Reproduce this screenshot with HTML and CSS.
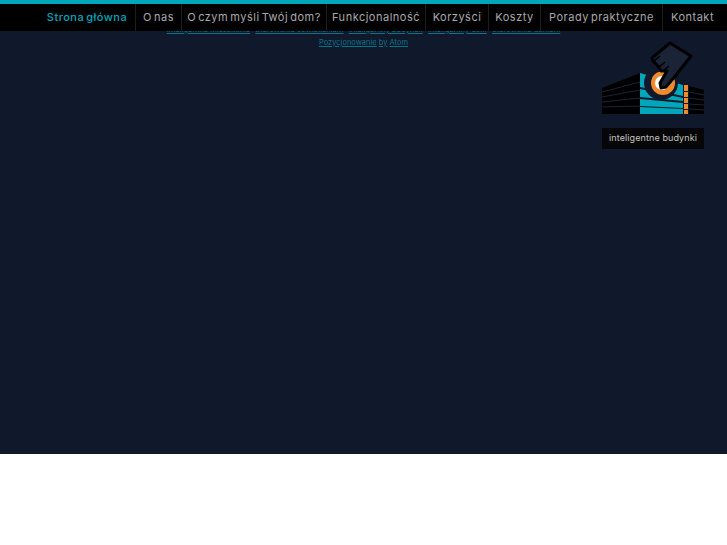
FILE: index.html
```html
<!doctype html>
<html lang="pl">
	<head>
		<meta charset="utf-8">
		<title>Inteligentne budynki</title>
		<link rel="stylesheet" href="styles.css">
	</head>
	<body>
		<div class="strona">
			<div class="stopka">
				<p>
					<a href="#">Inteligentne mieszkanie</a>
					<a href="#">Sterowanie oświetleniem</a>
					<a href="#">Inteligentny budynek</a>
					<a href="#">Inteligentny dom</a>
					<a href="#">Sterowanie domem</a>
				</p>
				<p class="atom"><a href="#">Pozycjonowanie</a> <a href="#">by</a> <a href="#">Atom</a></p>
			</div>

			<nav class="menu">
				<a class="aktywny" href="#">Strona główna</a>
				<a href="#">O nas</a>
				<a href="#">O czym myśli Twój dom?</a>
				<a href="#">Funkcjonalność</a>
				<a href="#">Korzyści</a>
				<a href="#">Koszty</a>
				<a href="#">Porady praktyczne</a>
				<a href="#">Kontakt</a>
			</nav>

			<div class="logo">
				<svg width="104" height="76" viewBox="0 0 104 76">
					<!-- lewe skrzydlo -->
					<path d="M1 48 L39 33 V74 H1 Z" fill="#000"/>
					<path d="M1 52 L39 42 M1 57 L39 50 M1 62 L39 58 M1 67 L39 66" stroke="#1b2336" stroke-width="1" fill="none"/>
					<!-- fasada -->
					<path d="M39 33 L82 45 V56 L39 47 Z M39 49 L82 58 V61 L39 57 Z M39 59 L82 63 V68 L39 66 Z M39 67 L82 69 V74 H39 Z" fill="#00a7ba"/>
					<!-- pasek pomaranczowy -->
					<path d="M83 45 H87 V51 H83 Z M83 52 H87 V57 H83 Z M83 58 H87 V63 H83 Z M83 64 H87 V69 H83 Z M83 70 H87 V74 H83 Z" fill="#f08a2c"/>
					<!-- prawe skrzydlo -->
					<path d="M88 46 L103 50 V74 H88 Z" fill="#000"/>
					<path d="M88 52 L103 55 M88 58 L103 60 M88 64 L103 65 M88 69 L103 70" stroke="#1b2336" stroke-width="1" fill="none"/>
					<!-- kolo -->
					<circle cx="60" cy="43" r="17" fill="#10182b"/>
					<circle cx="62" cy="43" r="12" fill="#f08a2c"/>
					<circle cx="61" cy="43" r="7" fill="#fff"/>
					<!-- reka -->
					<path d="M69 3 L90 16 L75 35 L65 47 L60 48 L59 43 L66 31 L60 31 L57 26 L52 21 L51 18 Z" fill="#1b2336" stroke="#000" stroke-width="3" stroke-linejoin="round"/>
					<path d="M53 21 L59 16 M58 27 L64 22 M62 31 L68 26" stroke="#000" stroke-width="1.5" fill="none"/>
				</svg>
				<span class="logo-napis">inteligentne budynki</span>
			</div>
		</div>
	</body>
</html>
```

FILE: styles.css
```css
html, body {
	margin: 0;
	height: 100%;
	background-color: #fff;
}

body {
	font-family: "Inter", sans-serif;
}

.strona {
	position: relative;
	height: 454px;
	overflow: hidden;
	background-color: #10182b;
}

.menu {
	position: absolute;
	top: 0;
	left: 0;
	right: 0;
	height: 27px;
	display: grid;
	grid-template-columns: 96px 46px 145px 99px 63px 52px 122px 60px;
	justify-content: end;
	padding-right: 5px;
	background-color: #000;
	border-top: 4px solid #00a7ba;
}

.menu a {
	line-height: 26px;
	font-size: 11px;
	letter-spacing: 0.5px;
	word-spacing: -1.5px;
	text-align: center;
	white-space: nowrap;
	color: #a9a9a9;
	text-decoration: none;
	border-left: 1px solid #1d1d1d;
}

.menu a.aktywny {
	font-weight: 500;
	color: #00a7ba;
	border-left: 0;
}

.logo {
	position: absolute;
	top: 40px;
	right: 23px;
	width: 102px;
	display: flex;
	flex-direction: column;
	align-items: center;
}

.logo svg {
	display: block;
	flex: none;
}

.logo-napis {
	margin-top: 12px;
	width: 100%;
	height: 21px;
	line-height: 20px;
	text-align: center;
	white-space: nowrap;
	font-size: 9px;
	letter-spacing: 0.1px;
	color: #c4c4bc;
	background-color: #060608;
}

.stopka {
	padding-top: 23px;
	text-align: center;
	font-size: 7.5px;
	line-height: 13px;
}

.stopka p {
	margin: 0;
}

.stopka a {
	color: #06758a;
}

.stopka p a + a {
	margin-left: 3px;
}

.stopka p.atom a + a {
	margin-left: 0;
}
```
